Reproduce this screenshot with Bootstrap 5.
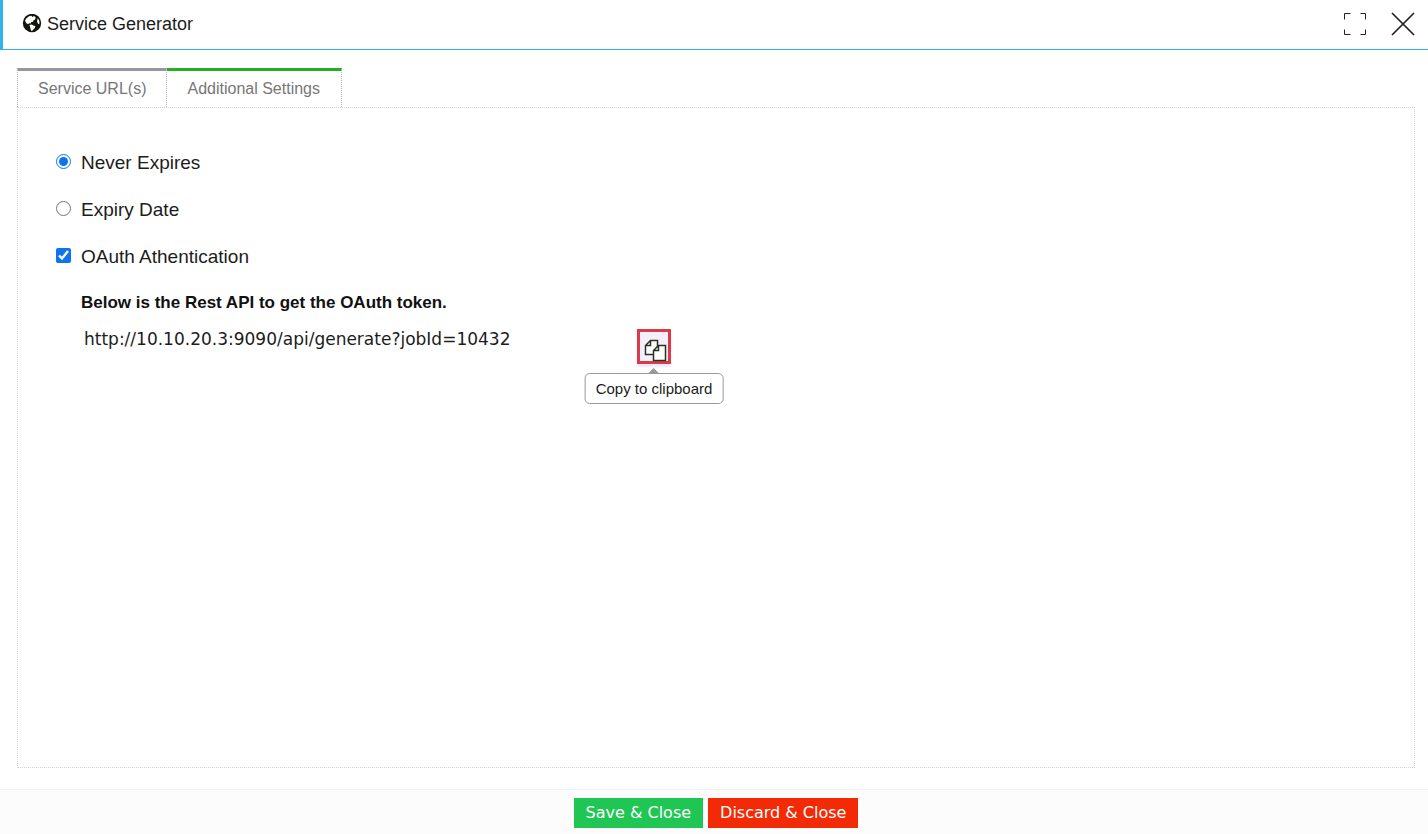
<!DOCTYPE html>
<html lang="en">
<head>
<meta charset="utf-8">
<meta name="viewport" content="width=device-width, initial-scale=1">
<title>Service Generator</title>
<link href="https://cdn.jsdelivr.net/npm/bootstrap@5.3.0/dist/css/bootstrap.min.css" rel="stylesheet">
<style>
  body { font-family: "Liberation Sans", Arial, sans-serif; color: #1c1c1c; background: #fff; }
  .verdana { font-family: "DejaVu Sans", Verdana, sans-serif; }
  .dialog-head { height: 50px; border-left: 3px solid #2fb5ea; border-bottom: 1px solid #2fb5ea; padding: 0 13px 2px 19px; }
  .dialog-name { gap: 5px; }
  .dialog-title { font-size: 18px; line-height: 24px; }
  .head-btn { border: 0; background: none; padding: 0; color: #222; line-height: 0; }
  .dialog-main { padding: 18px 13px 21px 17px; }
  .settings-tabs .nav-link { border: 1px dotted #b4b4bc; border-top: 3px solid #9696a0; border-bottom: 0; border-radius: 0; padding: 6px 20px; font-size: 16px; line-height: 24px; color: #777; }
  .settings-tabs .nav-link.active { border-top-color: #22b022; border-left: 0; padding-right: 21px; background: #fff; }
  .settings-pane { border: 1px dotted #d4d4d4; padding: 40px 38px; }
  .option { gap: 10px; height: 28px; margin-bottom: 19px; font-size: 19px; }
  .option input { width: 15px; height: 15px; margin: 0 0 2px; accent-color: #0b74ee; }
  .option label { padding-top: 2px; }
  .token-info { padding: 2px 0 0 25px; }
  .token-info h2 { font-size: 17px; line-height: 24px; font-weight: 700; margin: 0 0 8px; color: #111; }
  .token-url { width: 556px; padding-left: 3px; font-size: 17px; line-height: 32px; }
  .copy-wrap { margin-top: 6px; }
  .copy-btn { width: 34px; height: 35px; border: 3px solid #d93c48; background: #f5eefb; padding: 7px 0 0 3px; line-height: 0; box-shadow: 0 3px 2px #eee8f8; color: #293322; }
  .copy-tip { position: absolute; top: 100%; left: 50%; transform: translateX(-50%); margin-top: 9px; padding: 3px 10px; border: 1px solid #999; border-radius: 5px; background: #fff; font-size: 15px; line-height: 23px; white-space: nowrap; }
  .copy-tip::before { content: ""; position: absolute; bottom: 100%; left: 50%; margin-left: -6px; border: 6px solid transparent; border-top: 0; border-bottom-color: #999; }
  .dialog-foot { height: 45px; border-top: 1px solid #f2f2f2; background: #fcfcfc; gap: 5px; padding: 8px 0 0 4px; }
  .foot-btn { height: 30px; border: 0; border-radius: 0; padding: 0 12px; font-size: 16px; line-height: 30px; color: #fff; }
  .foot-save { background: #20c654; }
  .foot-discard { background: #f22a06; }
</style>
</head>
<body class="d-flex flex-column min-vh-100">
<header class="dialog-head d-flex align-items-center justify-content-between">
  <div class="dialog-name d-flex align-items-center">
    <svg width="20" height="20" viewBox="0 0 20 20" aria-hidden="true"><circle cx="10" cy="9" r="9.2" fill="#15150f"/><path fill="#fff" d="M4.200 4.500 7 2.200l2.600-.4.600 1.200 1.800-1 1.600 1.200-.4 2.300-1.700.7-.4 1.600-1.800.2L8.500 9.600 7.300 9.300 6 10.200 4.200 8.900 3 6.800zM7.400 11l2.300-.6 1.600 1 2.100.7-.7 2.200-1.600 1.400-1.300 1.500-1.200-1.800-.3-2zM15.500 4.500l1.200 1 .8 2.200-.3 2.600-1.200-.6-.9-2.200z"/></svg>
    <h1 class="dialog-title fw-normal m-0">Service Generator</h1>
  </div>
  <div class="d-flex align-items-center gap-4">
    <button class="head-btn" type="button" aria-label="Full screen"><svg width="24" height="24" viewBox="0 0 24 24" fill="none" stroke="currentColor"><path d="M1.500 7.500v-6h6M17.500 1.500h5v6M22.500 17.500v5h-5M7.500 22.500h-6v-5"/></svg></button>
    <button class="head-btn" type="button" aria-label="Close"><svg width="24" height="24" viewBox="0 0 24 24" fill="none" stroke="currentColor" stroke-width="1.700"><path d="M1 1l22 22M23 1L1 23"/></svg></button>
  </div>
</header>
<main class="dialog-main flex-grow-1 d-flex flex-column">
  <ul class="nav settings-tabs">
    <li class="nav-item"><a class="nav-link" href="#urls">Service URL(s)</a></li>
    <li class="nav-item"><a class="nav-link active" href="#settings" aria-current="page">Additional Settings</a></li>
  </ul>
  <section class="settings-pane flex-grow-1" id="settings">
    <div class="option d-flex align-items-center"><input type="radio" name="expiry" id="never" checked><label for="never">Never Expires</label></div>
    <div class="option d-flex align-items-center"><input type="radio" name="expiry" id="date"><label for="date">Expiry Date</label></div>
    <div class="option d-flex align-items-center"><input type="checkbox" id="oauth" checked><label for="oauth">OAuth Athentication</label></div>
    <div class="token-info">
      <h2>Below is the Rest API to get the OAuth token.</h2>
      <div class="d-flex align-items-start">
        <div class="token-url verdana">http://10.10.20.3:9090/api/generate?jobId=10432</div>
        <div class="copy-wrap position-relative">
          <button class="copy-btn d-block" type="button" aria-label="Copy to clipboard"><svg width="24" height="24" viewBox="0 0 24 24" fill="#fff" stroke="currentColor" stroke-width="1.500"><path d="M6.500 1.500H13.500V15.500H1.500V6.500zM6.500 1.500V6.500H1.500"/><path d="M14.500 6.500H21.500V21.500H9.500V11.500zM14.500 6.500V11.500H9.500"/></svg></button>
          <div class="copy-tip" role="tooltip">Copy to clipboard</div>
        </div>
      </div>
    </div>
  </section>
</main>
<footer class="dialog-foot d-flex justify-content-center align-items-start">
  <button class="foot-btn foot-save verdana" type="button">Save &amp; Close</button>
  <button class="foot-btn foot-discard verdana" type="button">Discard &amp; Close</button>
</footer>
<script src="https://cdn.jsdelivr.net/npm/bootstrap@5.3.0/dist/js/bootstrap.bundle.min.js"></script>
</body>
</html>
